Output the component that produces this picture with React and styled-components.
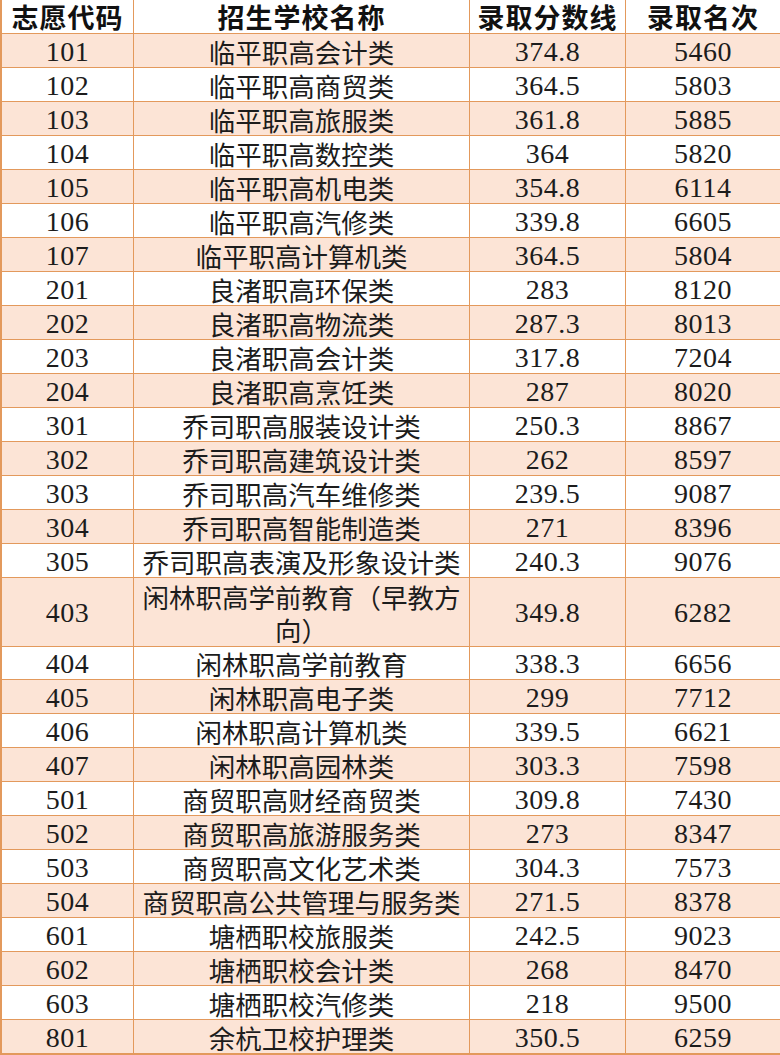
import styled, { createGlobalStyle } from "styled-components";

const GlobalStyle = createGlobalStyle`
  body {
    margin: 0;
    background: #ffffff;
  }
`;

const LINE = "#e3995c";

const Table = styled.div`
  width: 780px;
  border-bottom: 2px solid ${LINE};
  font-family: "Liberation Serif", "Noto Sans CJK SC", serif;
  color: #1c1c1c;
`;

const Row = styled.div`
  display: grid;
  grid-template-columns: 134px 336px 156px 154px;
  height: ${(p) => (p.$tall ? 68 : 34)}px;
  background: ${(p) => (p.$shade ? "#fce4d6" : "#ffffff")};
`;

const Cell = styled.div`
  display: flex;
  align-items: center;
  justify-content: center;
  text-align: center;
  box-sizing: border-box;
  border-bottom: 1px solid ${LINE};
  border-right: 1px solid ${LINE};
  font-size: 26px;
  line-height: 30px;
  padding: 2px 0 0;
  &:first-child {
    border-left: 2px solid ${LINE};
  }
  &:last-child {
    border-right: none;
  }
`;

const HeadCell = styled(Cell)`
  font-family: "Noto Sans CJK SC", sans-serif;
  font-weight: 700;
  font-size: 27px;
  line-height: 30px;
  padding: 1px 0 0;
  color: #111;
  letter-spacing: 1px;
`;

const Name = styled.span`
  font-family: "Noto Sans CJK SC", sans-serif;
  font-size: 26.5px;
  line-height: ${(p) => (p.$tall ? 33 : 30)}px;
  font-weight: 400;
`;

const Num = styled.span`
  font-size: 28px;
  letter-spacing: 0.5px;
`;

const rows = [
  ["101", "临平职高会计类", "374.8", "5460"],
  ["102", "临平职高商贸类", "364.5", "5803"],
  ["103", "临平职高旅服类", "361.8", "5885"],
  ["104", "临平职高数控类", "364", "5820"],
  ["105", "临平职高机电类", "354.8", "6114"],
  ["106", "临平职高汽修类", "339.8", "6605"],
  ["107", "临平职高计算机类", "364.5", "5804"],
  ["201", "良渚职高环保类", "283", "8120"],
  ["202", "良渚职高物流类", "287.3", "8013"],
  ["203", "良渚职高会计类", "317.8", "7204"],
  ["204", "良渚职高烹饪类", "287", "8020"],
  ["301", "乔司职高服装设计类", "250.3", "8867"],
  ["302", "乔司职高建筑设计类", "262", "8597"],
  ["303", "乔司职高汽车维修类", "239.5", "9087"],
  ["304", "乔司职高智能制造类", "271", "8396"],
  ["305", "乔司职高表演及形象设计类", "240.3", "9076"],
  ["403", "闲林职高学前教育（早教方向）", "349.8", "6282"],
  ["404", "闲林职高学前教育", "338.3", "6656"],
  ["405", "闲林职高电子类", "299", "7712"],
  ["406", "闲林职高计算机类", "339.5", "6621"],
  ["407", "闲林职高园林类", "303.3", "7598"],
  ["501", "商贸职高财经商贸类", "309.8", "7430"],
  ["502", "商贸职高旅游服务类", "273", "8347"],
  ["503", "商贸职高文化艺术类", "304.3", "7573"],
  ["504", "商贸职高公共管理与服务类", "271.5", "8378"],
  ["601", "塘栖职校旅服类", "242.5", "9023"],
  ["602", "塘栖职校会计类", "268", "8470"],
  ["603", "塘栖职校汽修类", "218", "9500"],
  ["801", "余杭卫校护理类", "350.5", "6259"],
];

export default function App() {
  return (
    <>
      <GlobalStyle />
      <Table>
        <Row>
          <HeadCell>志愿代码</HeadCell>
          <HeadCell>招生学校名称</HeadCell>
          <HeadCell>录取分数线</HeadCell>
          <HeadCell>录取名次</HeadCell>
        </Row>
        {rows.map(([code, name, score, rank], i) => {
          const tall = name.length > 12;
          return (
            <Row key={code} $shade={i % 2 === 0} $tall={tall}>
              <Cell>
                <Num>{code}</Num>
              </Cell>
              <Cell>
                <Name $tall={tall}>{name}</Name>
              </Cell>
              <Cell>
                <Num>{score}</Num>
              </Cell>
              <Cell>
                <Num>{rank}</Num>
              </Cell>
            </Row>
          );
        })}
      </Table>
    </>
  );
}
